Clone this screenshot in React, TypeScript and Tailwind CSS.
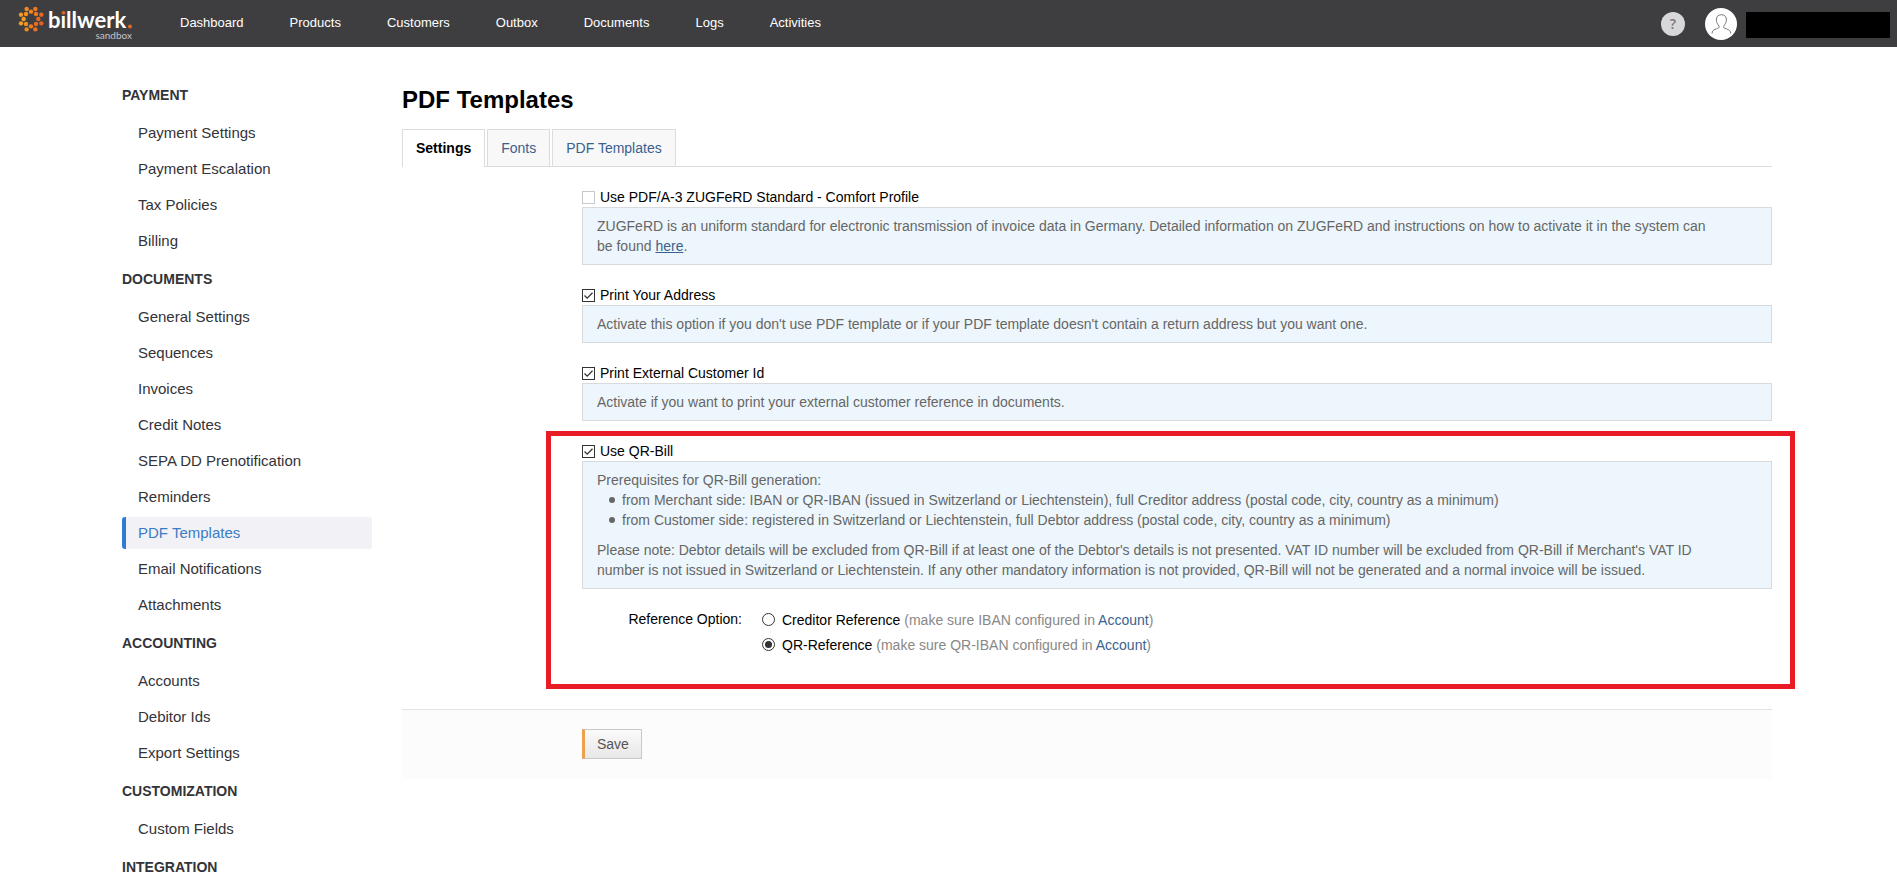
import React, { useState } from "react";

const navLinks = ["Dashboard", "Products", "Customers", "Outbox", "Documents", "Logs", "Activities"];

const menu = [
  { title: "PAYMENT", items: ["Payment Settings", "Payment Escalation", "Tax Policies", "Billing"] },
  {
    title: "DOCUMENTS",
    items: [
      "General Settings",
      "Sequences",
      "Invoices",
      "Credit Notes",
      "SEPA DD Prenotification",
      "Reminders",
      "PDF Templates",
      "Email Notifications",
      "Attachments"
    ]
  },
  { title: "ACCOUNTING", items: ["Accounts", "Debitor Ids", "Export Settings"] },
  { title: "CUSTOMIZATION", items: ["Custom Fields"] },
  { title: "INTEGRATION", items: [] }
];

const logoDots: [number, number, string][] = [
  [26, 9, "#f08a22"],
  [52, 9, "#ec7a20"],
  [70, 26, "#e96a1f"],
  [70, 52, "#e7601e"],
  [52, 70, "#ec7420"],
  [26, 70, "#f08a22"],
  [9, 52, "#f49c24"],
  [9, 26, "#f39824"],
  [39, 17, "#f08422"],
  [54, 24, "#ec7820"],
  [61, 39, "#e8661f"],
  [54, 54, "#ea6c1f"],
  [39, 61, "#ee7e21"],
  [24, 54, "#f29224"],
  [17, 39, "#f49e25"],
  [24, 24, "#f29224"]
];

function Logo() {
  return (
    <svg width="116" height="47" viewBox="0 0 116 47" role="img" aria-label="billwerk sandbox">
      <defs>
        {/* orange dot on a white stem */}
        <linearGradient id="logo-i" gradientUnits="userSpaceOnUse" x1="0" y1="0" x2="0" y2="30">
          <stop offset="0.5" stopColor="#e9661f" />
          <stop offset="0.5" stopColor="#fff" />
        </linearGradient>
      </defs>
      <g transform="translate(0 6) scale(0.3333)">
        {logoDots.map(([x, y, color]) => (
          <circle key={`${x}-${y}`} cx={x} cy={y} r="6.6" fill={color} />
        ))}
      </g>
      <text x="30" y="28" fill="#fff" fontFamily="Lato, sans-serif" fontWeight="700" fontSize="22">
        b<tspan fill="url(#logo-i)">i</tspan>llwerk
      </text>
      <circle cx="112" cy="26.500" r="2" fill="#e9661f" />
      <text x="114" y="39" textAnchor="end" fill="#c4c4c6" fontFamily="Lato, sans-serif" fontSize="10">
        sandbox
      </text>
    </svg>
  );
}

function Header() {
  return (
    <header className="flex h-[47px] items-center bg-[#3e3e40] pl-[18px] pr-[7px] text-[13px] text-white">
      <a href="#" className="mr-[46px]">
        <Logo />
      </a>
      <nav className="flex gap-[46px] pb-0.5">
        {navLinks.map((link) => (
          <a key={link} href="#">
            {link}
          </a>
        ))}
      </nav>
      <div className="ml-auto flex items-center">
        <button
          aria-label="Help"
          className="flex size-6 items-center justify-center rounded-full bg-[#d8d8da] font-['Open_Sans',sans-serif] text-sm font-semibold text-[#77777a]"
        >
          ?
        </button>
        <button aria-label="Profile" className="ml-5 mr-[9px] size-8 rounded-full bg-white">
          <svg viewBox="0 0 32 32" fill="none" stroke="#77777a" strokeWidth="1">
            <path d="M7 25.500c.3-2.400 1.200-3.500 3.200-4.200 2-.7 3.600-1.100 3.900-2 .2-.8-.2-1.600-.9-2.500-1-1.300-1.700-2.600-1.800-4.600-.2-3.300 1.500-5.500 5-5.500s5.200 2.200 5 5.500c-.1 2-.8 3.300-1.800 4.600-.7.900-1.100 1.700-.9 2.500.3.900 1.900 1.300 3.900 2 2 .7 2.900 1.800 3.200 4.200" />
          </svg>
        </button>
        <div className="mt-0.5 h-[26px] w-36 bg-black" />
      </div>
    </header>
  );
}

function Sidebar() {
  return (
    <aside className="flex w-[250px] shrink-0 flex-col gap-1 text-[15px] text-[#333338]">
      {menu.map((group) => (
        <React.Fragment key={group.title}>
          <h2 className="my-0.5 flex h-8 items-center text-sm font-bold">{group.title}</h2>
          {group.items.map((item) => (
            <a
              key={item}
              href="#"
              className={
                item === "PDF Templates"
                  ? "flex h-8 items-center rounded-[3px] border-l-4 border-[#2f7bd4] bg-[#f1f1f6] pl-3 text-[#3b7dc4]"
                  : "flex h-8 items-center border-l-4 border-transparent pl-3"
              }
            >
              {item}
            </a>
          ))}
        </React.Fragment>
      ))}
    </aside>
  );
}

interface OptionProps {
  label: string;
  defaultChecked?: boolean;
  children: React.ReactNode;
}

function Option({ label, defaultChecked, children }: OptionProps) {
  return (
    <div>
      <label className="flex h-5 w-fit items-center gap-[5px]">
        <span className="grid">
          <input
            type="checkbox"
            defaultChecked={defaultChecked}
            className="peer col-start-1 row-start-1 size-[13px] appearance-none border border-[#c8c8c8] bg-white checked:border-[#333333]"
          />
          <svg
            viewBox="0 0 13 13"
            fill="none"
            stroke="#333333"
            strokeWidth="1.3"
            className="pointer-events-none invisible col-start-1 row-start-1 size-[13px] peer-checked:visible"
          >
            <path d="M2.500 6.500l2.700 2.700 5.300-5.400" />
          </svg>
        </span>
        {label}
      </label>
      <div className="border border-[#d7dbde] bg-[#edf6fc] py-2 pl-[14px] pr-[50px] text-[#666666]">{children}</div>
    </div>
  );
}

interface ReferenceProps {
  label: string;
  account: string;
  checked: boolean;
  onChange: () => void;
}

function Reference({ label, account, checked, onChange }: ReferenceProps) {
  return (
    <div className="flex h-[25px] items-center">
      <label className="flex items-center gap-[7px]">
        <span className="grid place-items-center">
          <input
            type="radio"
            name="reference"
            checked={checked}
            onChange={onChange}
            className="peer col-start-1 row-start-1 size-[13px] appearance-none rounded-full border border-[#333333] bg-white"
          />
          <span className="pointer-events-none invisible col-start-1 row-start-1 size-[7px] rounded-full bg-[#333333] peer-checked:visible" />
        </span>
        {label}
      </label>
      <span className="ml-1 text-[#888888]">
        (make sure {account} configured in{" "}
        <a href="#" className="text-[#3b5f8f]">
          Account
        </a>
        )
      </span>
    </div>
  );
}

function Bullet({ children }: { children: React.ReactNode }) {
  return (
    <li className="flex before:mr-[7px] before:mt-[7px] before:size-1.5 before:shrink-0 before:rounded-full before:bg-[#666666]">
      {children}
    </li>
  );
}

export default function App() {
  const [reference, setReference] = useState("qr");

  return (
    <div className="bg-white font-['Liberation_Sans',Arial,sans-serif] text-sm/5 text-black">
      <Header />
      <div className="flex gap-[30px] pl-[122px] pr-[125px] pt-[30px]">
        <Sidebar />
        <main className="min-w-0 flex-1 pt-2">
          <h1 className="mb-[14px] text-2xl/[30px] font-bold">PDF Templates</h1>

          <div className="flex gap-0.5 border-b border-[#dcdcdc]">
            <a href="#" className="-mb-px border border-b-0 border-[#dcdcdc] bg-white px-[13px] pb-[9px] pt-2 font-bold">
              Settings
            </a>
            <a href="#" className="border border-b-0 border-[#dcdcdc] bg-[#f8f8f8] px-[13px] py-2 text-[#3b5f8f]">
              Fonts
            </a>
            <a href="#" className="border border-b-0 border-[#dcdcdc] bg-[#f8f8f8] px-[13px] py-2 text-[#3b5f8f]">
              PDF Templates
            </a>
          </div>

          <form onSubmit={(e) => e.preventDefault()}>
            <div className="flex flex-col gap-5 pb-[52px] pl-[180px] pt-5">
              <Option label="Use PDF/A-3 ZUGFeRD Standard - Comfort Profile">
                ZUGFeRD is an uniform standard for electronic transmission of invoice data in Germany. Detailed
                information on ZUGFeRD and instructions on how to activate it in the system can be found{" "}
                <a href="#" className="text-[#3b5f8f] underline">
                  here
                </a>
                .
              </Option>
              <Option label="Print Your Address" defaultChecked>
                Activate this option if you don't use PDF template or if your PDF template doesn't contain a return
                address but you want one.
              </Option>
              <Option label="Print External Customer Id" defaultChecked>
                Activate if you want to print your external customer reference in documents.
              </Option>

              <section className="relative">
                {/* highlight frame */}
                <div className="pointer-events-none absolute -bottom-8 -left-9 -right-[23px] -top-[10px] border-[5px] border-[#e81c25]" />
                <Option label="Use QR-Bill" defaultChecked>
                  <p>Prerequisites for QR-Bill generation:</p>
                  <ul className="mb-[10px] pl-3">
                    <Bullet>
                      from Merchant side: IBAN or QR-IBAN (issued in Switzerland or Liechtenstein), full Creditor
                      address (postal code, city, country as a minimum)
                    </Bullet>
                    <Bullet>
                      from Customer side: registered in Switzerland or Liechtenstein, full Debtor address (postal code,
                      city, country as a minimum)
                    </Bullet>
                  </ul>
                  <p>
                    Please note: Debtor details will be excluded from QR-Bill if at least one of the Debtor's details
                    is not presented. VAT ID number will be excluded from QR-Bill if Merchant's VAT ID number is not
                    issued in Switzerland or Liechtenstein. If any other mandatory information is not provided, QR-Bill
                    will not be generated and a normal invoice will be issued.
                  </p>
                </Option>
                <div role="radiogroup" aria-labelledby="reference-label" className="mt-[18px] flex gap-5">
                  <div id="reference-label" className="w-40 text-right leading-[25px]">
                    Reference Option:
                  </div>
                  <div>
                    <Reference
                      label="Creditor Reference"
                      account="IBAN"
                      checked={reference === "creditor"}
                      onChange={() => setReference("creditor")}
                    />
                    <Reference
                      label="QR-Reference"
                      account="QR-IBAN"
                      checked={reference === "qr"}
                      onChange={() => setReference("qr")}
                    />
                  </div>
                </div>
              </section>
            </div>

            <div className="border-t border-[#e2e2e2] bg-[#fcfcfc] pb-5 pl-[180px] pt-[19px]">
              <button
                type="submit"
                className="h-[30px] border border-l-[3px] border-[#c8c8c8] border-l-[#eda04f] bg-linear-to-b from-[#fafafa] to-[#e8e8e8] px-3 text-[#555555]"
              >
                Save
              </button>
            </div>
          </form>
        </main>
      </div>
    </div>
  );
}
